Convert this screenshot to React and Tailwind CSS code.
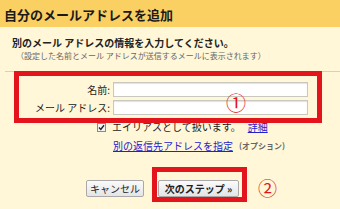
import React from "react";

export default function App() {
  const font = { fontFamily: '"Noto Sans CJK JP", "Noto Sans", sans-serif' };
  return (
    <div
      className="relative w-[340px] h-[209px] overflow-hidden bg-[#fff7d8] text-[#222]"
      style={font}
    >
      <div className="h-[27px] bg-[#fbd062] flex items-center pl-[4px] pt-[2px]">
        <span className="text-[13px] font-bold leading-none text-[#1a1a1a]">
          自分のメールアドレスを追加
        </span>
      </div>

      <div className="pt-[10px] pl-[12px]">
        <div className="text-[10px] leading-[12px] font-bold">
          別のメール アドレスの情報を入力してください。
        </div>
        <div className="mt-[2px] pl-[4px] text-[8px] leading-[9px] text-[#666]">
          （設定した名前とメール アドレスが送信するメールに表示されます）
        </div>
      </div>

      <div className="mt-[11px] ml-[5px] h-px bg-[#f2cf7c]" />

      <div className="mt-[10px] grid grid-cols-[110px_195px] gap-x-[3px] gap-y-[3px] items-center">
        <div className="text-right text-[10px] leading-[12px]">名前:</div>
        <div className="h-[15px] bg-white border border-[#c8c8c0] shadow-[inset_0_1px_1px_rgba(0,0,0,0.12)]" />
        <div className="text-right text-[10px] leading-[12px]">メール アドレス:</div>
        <div className="h-[15px] bg-white border border-[#c8c8c0] shadow-[inset_0_1px_1px_rgba(0,0,0,0.12)]" />
      </div>

      <div className="mt-[6px] pl-[97px] flex items-center h-[12px]">
        <div className="w-[9px] h-[9px] border border-[#8a8a8a] bg-[#f4f4f4] flex items-center justify-center">
          <svg width="7" height="7" viewBox="0 0 7 7">
            <path d="M1 3.6 L2.8 5.4 L6 1.3" fill="none" stroke="#222" strokeWidth="1.4" />
          </svg>
        </div>
        <span className="ml-[6px] text-[10px] leading-[12px]">エイリアスとして扱います。</span>
        <span className="ml-[7px] text-[10px] leading-[12px] text-[#2222cc] underline">詳細</span>
      </div>

      <div className="mt-[7px] pl-[113px] flex items-center h-[12px]">
        <span className="text-[10px] leading-[12px] text-[#2222cc] underline">別の返信先アドレスを指定</span>
        <span className="ml-[6px] text-[8px] leading-[10px] text-[#666] font-bold">(オプション)</span>
      </div>

      <div className="mt-[28px] pl-[86px] flex gap-[14px]">
        <button className="h-[17px] w-[58px] border border-[#a9a9a9] rounded-[2px] bg-gradient-to-b from-[#fbfbfb] to-[#e4e4e4] text-[10px] leading-none text-[#222] flex items-center justify-center">
          キャンセル
        </button>
        <button className="h-[17px] w-[81px] border border-[#a9a9a9] rounded-[2px] bg-gradient-to-b from-[#fbfbfb] to-[#e4e4e4] text-[10px] font-bold leading-none text-[#222] flex items-center justify-center">
          次のステップ »
        </button>
      </div>

      <div className="absolute left-[14px] top-[71px] w-[308px] h-[52px] border-[5px] border-[#e3141b]" />
      <div className="absolute left-[226px] top-[93px] text-[20px] leading-[20px] text-[#e3141b]">①</div>

      <div className="absolute left-[152px] top-[167px] w-[95px] h-[35px] border-[5px] border-[#e3141b]" />
      <div className="absolute left-[258px] top-[178px] text-[19px] leading-[20px] text-[#e3141b]">②</div>
    </div>
  );
}
